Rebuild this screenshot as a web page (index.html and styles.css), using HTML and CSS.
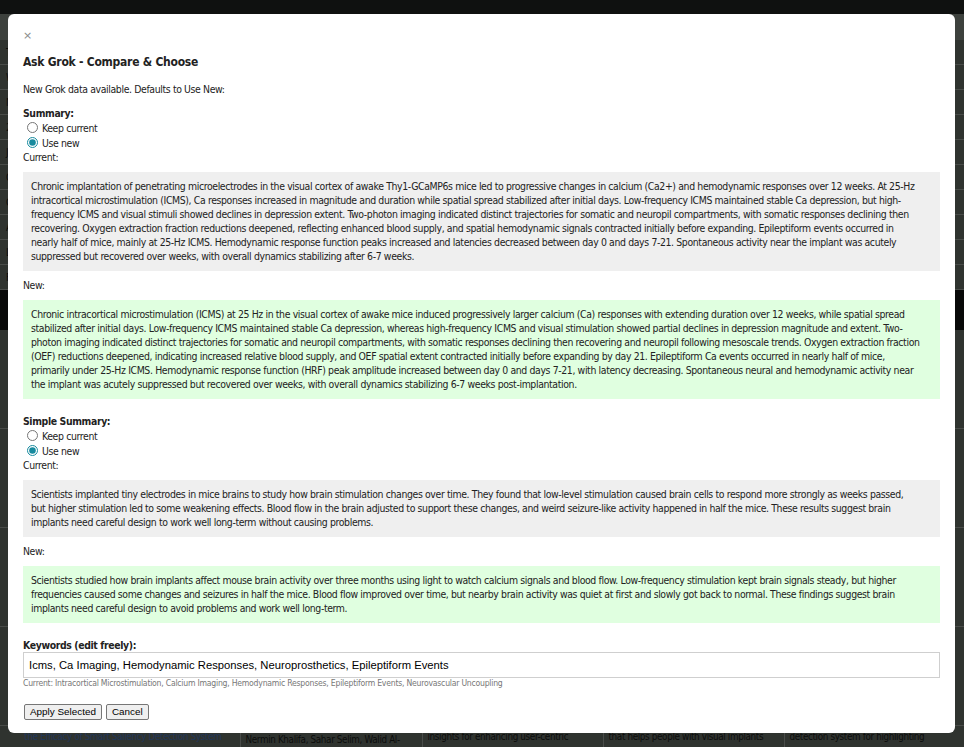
FILE: index.html
```html
<!DOCTYPE html>
<html lang="en">
<head>
    <meta charset="UTF-8">
    <meta name="viewport" content="width=device-width, initial-scale=1.0">
    <title>Papers - Ask Grok</title>
    <link rel="stylesheet" href="styles.css">
</head>
<body>
    <div class="page">
        <header class="site-header"></header>
        <nav class="subnav">Papers &middot; Authors &middot; Topics &middot; Export</nav>
        <table class="stats-table">
            <tr><td>Total papers</td><td>128</td><td>Reviewed</td><td>96</td><td>Pending</td><td>32</td></tr>
            <tr><td>With summary</td><td>112</td><td>With keywords</td><td>104</td><td>Flagged</td><td>4</td></tr>
            <tr><td>Neuroprosthetics</td><td>41</td><td>Imaging</td><td>27</td><td>Vision</td><td>18</td></tr>
            <tr><td>2025</td><td>38</td><td>2024</td><td>46</td><td>2023</td><td>44</td></tr>
            <tr><td>Journals</td><td>22</td><td>Conferences</td><td>9</td><td>Preprints</td><td>5</td></tr>
            <tr><td>Open access</td><td>71</td><td>Closed</td><td>57</td><td>Unknown</td><td>0</td></tr>
            <tr><td>Grok runs</td><td>64</td><td>Applied</td><td>51</td><td>Skipped</td><td>13</td></tr>
            <tr><td>Authors</td><td>402</td><td>Institutions</td><td>88</td><td>Countries</td><td>19</td></tr>
            <tr><td>Last sync</td><td>today</td><td>Source</td><td>local</td><td>Status</td><td>ok</td></tr>
            <tr><td>Filters</td><td>none</td><td>Sort</td><td>year</td><td>Order</td><td>desc</td></tr>
        </table>
        <div class="section-bar">Title &middot; Authors &middot; Summary &middot; Simple summary &middot; Method</div>
        <table class="papers-table">
            <colgroup>
                <col class="col-title">
                <col class="col-authors">
                <col class="col-text">
                <col class="col-text">
                <col class="col-text">
            </colgroup>
            <tr class="paper-row">
                <td><a href="#">Long-term evolution of calcium and hemodynamic responses to chronic intracortical microstimulation</a></td>
                <td>Krushna Chandra Yaxley, Adam Smith, Takashi D. Y. Kozai</td>
                <td>tracks how the visual cortex adapts to penetrating electrodes over twelve weeks</td>
                <td>that helps design stable, long-lasting brain implants</td>
                <td>mesoscale imaging study of awake transgenic mice</td>
            </tr>
            <tr class="paper-row">
                <td><a href="#">Artificial vision through cortical prostheses: a perceptual model of phosphenes</a></td>
                <td>Maria Lopez, Jun Park, Ione Fine</td>
                <td>predicts phosphene shapes from stimulation parameters</td>
                <td>that helps people with visual implants see shapes</td>
                <td>simulation framework for prosthetic vision</td>
            </tr>
            <tr class="paper-row">
                <td><a href="#">Explainable scene simplification for retinal implant users</a></td>
                <td>Lucas Nadolskis, Michael Beyeler</td>
                <td>insights for reducing clutter in low resolution vision</td>
                <td>that helps people with visual implants navigate</td>
                <td>saliency based preprocessing pipeline</td>
            </tr>
            <tr class="paper-row">
                <td><a href="#">Object recognition with simulated phosphene vision in virtual reality</a></td>
                <td>Sara Ahmed, Omar Farouk, Lina Haddad</td>
                <td>compares edge and depth based renderings</td>
                <td>that helps people with visual implants recognise objects</td>
                <td>user study with sighted participants</td>
            </tr>
            <tr class="last-row">
                <td><a href="#">the Efficacy of Smart Saliency Detection System</a></td>
                <td class="authors">Nermin Khalifa, Sahar Selim, Walid Al-</td>
                <td>insights for enhancing user-centric</td>
                <td>that helps people with visual implants</td>
                <td>detection system for highlighting</td>
            </tr>
        </table>
    </div>

    <div class="overlay"></div>

    <div class="modal">
        <div class="close">&times;</div>
        <h2 class="modal-title">Ask Grok - Compare &amp; Choose</h2>
        <p class="intro">New Grok data available. Defaults to Use New:</p>

        <div class="field">
            <div class="field-label">Summary:</div>
            <label class="choice"><input type="radio" name="summary"> Keep current</label>
            <label class="choice"><input type="radio" name="summary" checked> Use new</label>
            <div class="caption">Current:</div>
            <div class="text-box current">
                Chronic implantation of penetrating microelectrodes in the visual cortex of awake Thy1-GCaMP6s mice led to progressive changes in calcium (Ca2+) and hemodynamic responses over 12 weeks. At 25-Hz<br>
                intracortical microstimulation (ICMS), Ca responses increased in magnitude and duration while spatial spread stabilized after initial days. Low-frequency ICMS maintained stable Ca depression, but high-<br>
                frequency ICMS and visual stimuli showed declines in depression extent. Two-photon imaging indicated distinct trajectories for somatic and neuropil compartments, with somatic responses declining then<br>
                recovering. Oxygen extraction fraction reductions deepened, reflecting enhanced blood supply, and spatial hemodynamic signals contracted initially before expanding. Epileptiform events occurred in<br>
                nearly half of mice, mainly at 25-Hz ICMS. Hemodynamic response function peaks increased and latencies decreased between day 0 and days 7-21. Spontaneous activity near the implant was acutely<br>
                suppressed but recovered over weeks, with overall dynamics stabilizing after 6-7 weeks.
            </div>
            <div class="caption">New:</div>
            <div class="text-box new">
                Chronic intracortical microstimulation (ICMS) at 25 Hz in the visual cortex of awake mice induced progressively larger calcium (Ca) responses with extending duration over 12 weeks, while spatial spread<br>
                stabilized after initial days. Low-frequency ICMS maintained stable Ca depression, whereas high-frequency ICMS and visual stimulation showed partial declines in depression magnitude and extent. Two-<br>
                photon imaging indicated distinct trajectories for somatic and neuropil compartments, with somatic responses declining then recovering and neuropil following mesoscale trends. Oxygen extraction fraction<br>
                (OEF) reductions deepened, indicating increased relative blood supply, and OEF spatial extent contracted initially before expanding by day 21. Epileptiform Ca events occurred in nearly half of mice,<br>
                primarily under 25-Hz ICMS. Hemodynamic response function (HRF) peak amplitude increased between day 0 and days 7-21, with latency decreasing. Spontaneous neural and hemodynamic activity near<br>
                the implant was acutely suppressed but recovered over weeks, with overall dynamics stabilizing 6-7 weeks post-implantation.
            </div>
        </div>

        <div class="field">
            <div class="field-label">Simple Summary:</div>
            <label class="choice"><input type="radio" name="simple"> Keep current</label>
            <label class="choice"><input type="radio" name="simple" checked> Use new</label>
            <div class="caption">Current:</div>
            <div class="text-box current">
                Scientists implanted tiny electrodes in mice brains to study how brain stimulation changes over time. They found that low-level stimulation caused brain cells to respond more strongly as weeks passed,<br>
                but higher stimulation led to some weakening effects. Blood flow in the brain adjusted to support these changes, and weird seizure-like activity happened in half the mice. These results suggest brain<br>
                implants need careful design to work well long-term without causing problems.
            </div>
            <div class="caption">New:</div>
            <div class="text-box new">
                Scientists studied how brain implants affect mouse brain activity over three months using light to watch calcium signals and blood flow. Low-frequency stimulation kept brain signals steady, but higher<br>
                frequencies caused some changes and seizures in half the mice. Blood flow improved over time, but nearby brain activity was quiet at first and slowly got back to normal. These findings suggest brain<br>
                implants need careful design to avoid problems and work well long-term.
            </div>
        </div>

        <div class="field">
            <div class="field-label">Keywords (edit freely):</div>
            <input class="keywords" type="text" value="Icms, Ca Imaging, Hemodynamic Responses, Neuroprosthetics, Epileptiform Events">
            <div class="keywords-note">Current: Intracortical Microstimulation, Calcium Imaging, Hemodynamic Responses, Epileptiform Events, Neurovascular Uncoupling</div>
        </div>

        <div class="actions">
            <button type="button" class="btn">Apply Selected</button>
            <button type="button" class="btn">Cancel</button>
        </div>
    </div>
</body>
</html>
```

FILE: styles.css
```css
body {
    margin: 0;
    padding: 0;
    background-color: #778077;
    font-family: "DejaVu Sans Condensed", "DejaVu Sans", sans-serif;
    font-size: 9.8px;
    letter-spacing: -0.35px;
    color: #1c1f1c;
    overflow: hidden;
}

/* page behind the dialog */
.page {
    height: 100vh;
    overflow: hidden;
}

.site-header {
    height: 14px;
    background-color: #262b28;
}

.subnav {
    height: 26px;
    line-height: 26px;
    padding: 0 12px;
    background-color: #9aa29a;
}

.stats-table,
.papers-table {
    width: 100%;
    border-collapse: collapse;
}

.stats-table td {
    height: 24px;
    padding: 0 6px;
    border-bottom: 1px solid #b6bfb6;
}

.section-bar {
    height: 40px;
    line-height: 40px;
    padding: 0 12px;
    background-color: #161816;
    color: #3a3f3a;
}

.papers-table {
    table-layout: fixed;
}

.col-title {
    width: 240px;
}

.col-authors {
    width: 182px;
}

.col-text {
    width: 181px;
}

.papers-table td {
    padding: 4px 5px 0;
    vertical-align: top;
    border-bottom: 1px solid #b6bfb6;
    border-left: 1px solid #b6bfb6;
    line-height: 14px;
}

.paper-row td {
    height: 72px;
    padding-top: 26px;
}

.last-row td {
    white-space: nowrap;
}

.papers-table td:first-child {
    border-left: none;
    text-align: right;
    padding-right: 18px;
}

.papers-table td.authors {
    padding-top: 7px;
}

.papers-table a {
    color: #4f86d8;
    text-decoration: none;
}

.overlay {
    position: fixed;
    top: 0;
    left: 0;
    width: 100%;
    height: 100%;
    background-color: rgba(0, 0, 0, 0.6);
}

/* dialog */
.modal {
    position: fixed;
    top: 14px;
    left: 8px;
    width: 947px;
    box-sizing: border-box;
    padding: 15px 15px 13px;
    background-color: #fff;
    border-radius: 6px;
    font-size: 10.4px;
    letter-spacing: -0.37px;
    line-height: 14px;
    color: #222;
}

.close {
    font-family: "DejaVu Sans", sans-serif;
    font-size: 11px;
    letter-spacing: 0;
    color: #8a8a8a;
    line-height: 14px;
    cursor: pointer;
}

.modal-title {
    margin: 11px 0 12px;
    font-size: 12px;
    letter-spacing: -0.25px;
    line-height: 16px;
    font-weight: bold;
}

.intro {
    margin: 0 0 10px;
}

.field {
    margin-bottom: 15px;
}

.field-label {
    font-weight: bold;
}

.choice {
    display: flex;
    align-items: center;
    height: 15px;
}

.choice input {
    width: 11px;
    height: 11px;
    margin: 0 4px;
    accent-color: #178a9e;
}

.text-box {
    margin: 8px 0 7px;
    padding: 7px 8px 8px;
}

.text-box.current {
    background-color: #efefef;
}

.text-box.new {
    background-color: #e0ffe0;
}

.keywords {
    display: block;
    width: 100%;
    height: 26px;
    box-sizing: border-box;
    margin: 0;
    padding: 0 5px;
    border: 1px solid #cfcfcf;
    font-family: "Liberation Sans", Arial, sans-serif;
    font-size: 11.26px;
    letter-spacing: normal;
    color: #000;
}

.keywords-note {
    font-size: 8.6px;
    letter-spacing: -0.23px;
    line-height: 10px;
    color: #777;
}

.actions {
    display: flex;
    gap: 4px;
    margin-top: 16px;
}

.btn {
    margin: 0 0 0 1px;
    padding: 1px 5px;
    border: 1px solid #767676;
    border-radius: 2px;
    background-color: #efefef;
    font-family: "Liberation Sans", Arial, sans-serif;
    font-size: 9.9px;
    letter-spacing: normal;
    line-height: 12px;
    color: #000;
    cursor: pointer;
}

.btn + .btn {
    margin-left: 0;
}
```
